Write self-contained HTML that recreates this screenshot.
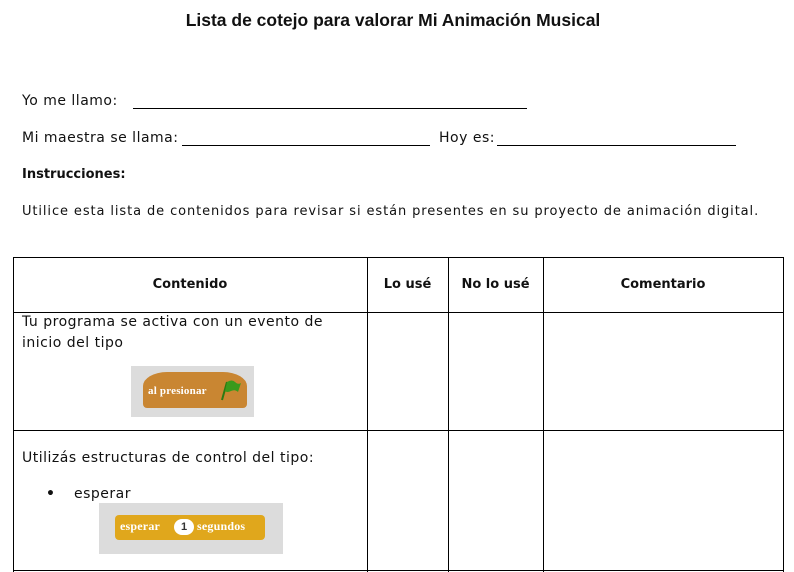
<!DOCTYPE html>
<html><head><meta charset="utf-8"><style>
body{margin:0;width:794px;height:572px;background:#fff;position:relative;overflow:hidden;font-family:"DejaVu Sans","Liberation Sans",sans-serif;color:#111}
.a{position:absolute;white-space:nowrap;font-size:14px;letter-spacing:0.5px}
.l{position:absolute;height:1px;background:#000}
.v{position:absolute;width:1px;background:#000}
.b{font-weight:bold}
</style></head><body>
<div class="a" style="left:0;width:786px;text-align:center;top:10px;font-family:'Liberation Sans',sans-serif;font-weight:bold;font-size:17.5px;letter-spacing:0">Lista de cotejo para valorar Mi Animación Musical</div>
<div class="a" style="left:22px;top:93px">Yo me llamo:</div>
<div class="l" style="left:133px;width:394px;top:108px"></div>
<div class="a" style="left:22px;top:130px">Mi maestra se llama:</div>
<div class="l" style="left:182px;width:248px;top:145px"></div>
<div class="a" style="left:439px;top:130px">Hoy es:</div>
<div class="l" style="left:497px;width:239px;top:145px"></div>
<div class="a b" style="left:22px;top:167px;letter-spacing:0;font-size:13px">Instrucciones:</div>
<div class="a" style="left:22px;top:204px;font-size:13px;letter-spacing:0.9px">Utilice esta lista de contenidos para revisar si están presentes en su proyecto de animación digital.</div>

<div class="l" style="left:13px;width:771px;top:257px"></div>
<div class="l" style="left:13px;width:771px;top:312px"></div>
<div class="l" style="left:13px;width:771px;top:430px"></div>
<div class="l" style="left:13px;width:771px;top:570px"></div>
<div class="v" style="left:13px;top:257px;height:315px"></div>
<div class="v" style="left:367px;top:257px;height:315px"></div>
<div class="v" style="left:448px;top:257px;height:315px"></div>
<div class="v" style="left:543px;top:257px;height:315px"></div>
<div class="v" style="left:783px;top:257px;height:315px"></div>

<div class="a b" style="left:13px;width:354px;text-align:center;top:277px;letter-spacing:0;font-size:13px">Contenido</div>
<div class="a b" style="left:367px;width:81px;text-align:center;top:277px;letter-spacing:0;font-size:13px">Lo usé</div>
<div class="a b" style="left:448px;width:95px;text-align:center;top:277px;letter-spacing:0;font-size:13px">No lo usé</div>
<div class="a b" style="left:543px;width:240px;text-align:center;top:277px;letter-spacing:0;font-size:13px">Comentario</div>

<div class="a" style="left:22px;top:314px">Tu programa se activa con un evento de</div>
<div class="a" style="left:22px;top:335px">inicio del tipo</div>
<div style="position:absolute;left:131px;top:366px;width:123px;height:51px;background:#dcdcdc"></div>
<div style="position:absolute;left:143px;top:372px;width:104px;height:36px;background:#c98632;border-radius:24px 24px 4px 4px/14px 14px 4px 4px"></div>
<div class="a" style="left:148px;top:385px;font-size:11px;font-weight:bold;color:#fff;letter-spacing:0.2px;font-family:'Liberation Serif',serif">al presionar</div>
<svg style="position:absolute;left:218px;top:378px" width="24" height="24"><path d="M4 22 L9 4" stroke="#2a7a12" stroke-width="2"/><path d="M9 4 Q14 1 17 4 T23 5 L20 14 Q17 11 13 13 T7 13 Z" fill="#3a9a1c"/></svg>

<div class="a" style="left:22px;top:450px">Utilizás estructuras de control del tipo:</div>
<div class="a" style="left:46px;top:486px;font-weight:bold">•</div>
<div class="a" style="left:74px;top:486px">esperar</div>
<div style="position:absolute;left:99px;top:503px;width:184px;height:51px;background:#dcdcdc"></div>
<div style="position:absolute;left:115px;top:515px;width:150px;height:25px;background:#e0a71c;border-radius:4px"></div>
<div class="a" style="left:120px;top:519px;font-size:12px;font-weight:bold;color:#fff;letter-spacing:0.2px;font-family:'Liberation Serif',serif">esperar</div>
<div style="position:absolute;left:174px;top:519px;width:20px;height:16px;background:#fff;border-radius:8px;font:bold 11px 'Liberation Sans',sans-serif;color:#333;text-align:center;line-height:16px">1</div>
<div class="a" style="left:197px;top:519px;font-size:12px;font-weight:bold;color:#fff;letter-spacing:0.2px;font-family:'Liberation Serif',serif">segundos</div>
</body></html>
